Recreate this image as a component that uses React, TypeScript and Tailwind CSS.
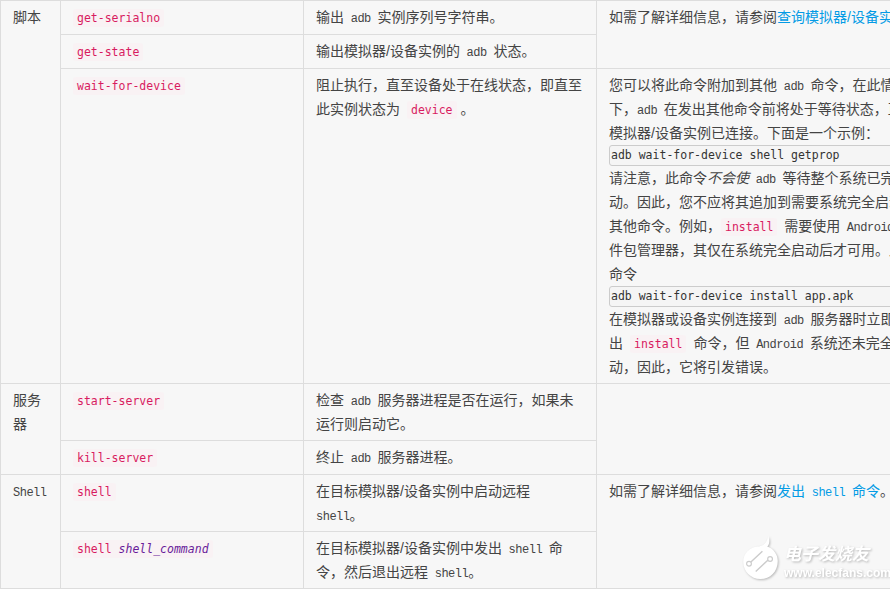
const BODY_FONT = "font-['Liberation_Sans','Noto_Sans_CJK_SC',sans-serif]";

function Code({ children }: { children: React.ReactNode }) {
  return (
    <code className="rounded-[3px] bg-[#f9f2f4] px-[4px] py-[2px] font-['DejaVu_Sans_Mono',monospace] text-[11.5px] leading-none text-[#d81b60]">
      {children}
    </code>
  );
}

function Mono({ children }: { children: React.ReactNode }) {
  return (
    <span className="font-['Liberation_Mono',monospace] text-[12px] leading-none tracking-[-0.5px] whitespace-pre">
      {children}
    </span>
  );
}

function Pre({ children }: { children: React.ReactNode }) {
  return (
    <div className="h-[21px] w-[400px] rounded-[3px] border border-[#ccc] bg-[#f5f5f5] pl-[1px] font-['DejaVu_Sans_Mono',monospace] text-[11.5px] leading-[18px] whitespace-pre text-[#333]">
      {children}
    </div>
  );
}

const cell = "border border-[#ddd] px-[12px] py-[4px] align-top";

function Watermark() {
  return (
    <div className="pointer-events-none absolute top-[535px] left-[742px] flex items-center gap-[5px] text-white drop-shadow-[1px_1px_1px_rgba(0,0,0,0.25)]">
      <svg width="37" height="46" viewBox="0 0 38 48">
        <path
          d="M27 1c2 6 1 9-1 11 6 2 11 8 11 15 0 11-8 19-18 19S1 38 1 28c0-9 7-15 15-16 6 0 10-4 11-11z"
          fill="#fff"
        />
        <path d="M7 30l14-13M14 38l14-13" stroke="#ccc" strokeWidth="1.5" fill="none" />
        <circle cx="7" cy="30" r="2.5" fill="#fff" stroke="#ccc" strokeWidth="1.2" />
        <circle cx="29" cy="25" r="2.5" fill="#fff" stroke="#ccc" strokeWidth="1.2" />
      </svg>
      <div className="mt-[8px] flex flex-col leading-none">
        <span className="text-[17px] leading-[22px] font-bold italic">电子发烧友</span>
        <span className="mt-[1px] text-[12px] leading-[13px] font-bold">www.elecfans.com</span>
      </div>
    </div>
  );
}

export default function App() {
  return (
    <div className={`relative h-[589px] w-[890px] overflow-hidden bg-white text-[14px] leading-[24px] text-[#444] ${BODY_FONT}`}>
      <table className="w-[1000px] table-fixed border-collapse bg-[#f7f7f7]">
        <colgroup>
          <col className="w-[60px]" />
          <col className="w-[243px]" />
          <col className="w-[293px]" />
          <col className="w-[404px]" />
        </colgroup>
        <tbody>
          {/* 脚本 */}
          <tr className="h-[34px]">
            <td rowSpan={3} className={cell}>脚本</td>
            <td className={cell}><Code>get-serialno</Code></td>
            <td className={cell}>输出<Mono> adb </Mono>实例序列号字符串。</td>
            <td rowSpan={2} className={cell}>
              如需了解详细信息，请参阅<a className="text-[#039be5]">查询模拟器/设备实例</a>
            </td>
          </tr>
          <tr className="h-[34px]">
            <td className={cell}><Code>get-state</Code></td>
            <td className={cell}>输出模拟器/设备实例的<Mono> adb </Mono>状态。</td>
          </tr>
          <tr className="h-[315px]">
            <td className={cell}><Code>wait-for-device</Code></td>
            <td className={cell}>
              阻止执行，直至设备处于在线状态，即直至此实例状态为
              <span className="ml-[7px]"><Code>device</Code></span> 。
            </td>
            <td className={`${cell} whitespace-nowrap`}>
              您可以将此命令附加到其他<Mono> adb </Mono>命令，在此情况<br />
              下，<Mono>adb </Mono>在发出其他命令前将处于等待状态，直至<br />
              模拟器/设备实例已连接。下面是一个示例：
              <Pre>adb wait-for-device shell getprop</Pre>
              请注意，此命令<em>不会使</em><Mono> adb </Mono>等待整个系统已完全启<br />
              动。因此，您不应将其追加到需要系统完全启动的<br />
              其他命令。例如，<Code>install</Code><Mono> </Mono>需要使用<Mono> Android </Mono>软<br />
              件包管理器，其仅在系统完全启动后才可用。此<br />
              命令
              <Pre>adb wait-for-device install app.apk</Pre>
              在模拟器或设备实例连接到<Mono> adb </Mono>服务器时立即发<br />
              出<span className="mx-[7px]"><Code>install</Code></span>命令，但<Mono> Android </Mono>系统还未完全启<br />
              动，因此，它将引发错误。
            </td>
          </tr>
          {/* 服务器 */}
          <tr className="h-[57px]">
            <td rowSpan={2} className={cell}>服务器</td>
            <td className={cell}><Code>start-server</Code></td>
            <td className={cell}>检查<Mono> adb </Mono>服务器进程是否在运行，如果未运行则启动它。</td>
            <td rowSpan={2} className={cell} />
          </tr>
          <tr className="h-[34px]">
            <td className={cell}><Code>kill-server</Code></td>
            <td className={cell}>终止<Mono> adb </Mono>服务器进程。</td>
          </tr>
          {/* Shell */}
          <tr className="h-[57px]">
            <td rowSpan={2} className={cell}><Mono>Shell</Mono></td>
            <td className={cell}><Code>shell</Code></td>
            <td className={cell}>在目标模拟器/设备实例中启动远程<br /><Mono>shell</Mono>。</td>
            <td rowSpan={2} className={cell}>
              如需了解详细信息，请参阅<a className="text-[#039be5]">发出<Mono> shell </Mono>命令</a>。
            </td>
          </tr>
          <tr className="h-[57px]">
            <td className={cell}>
              <Code>shell <em className="text-[#6a1b9a]">shell_command</em></Code>
            </td>
            <td className={cell}>在目标模拟器/设备实例中发出<Mono> shell </Mono>命令，然后退出远程<Mono> shell</Mono>。</td>
          </tr>
        </tbody>
      </table>
      <Watermark />
    </div>
  );
}
